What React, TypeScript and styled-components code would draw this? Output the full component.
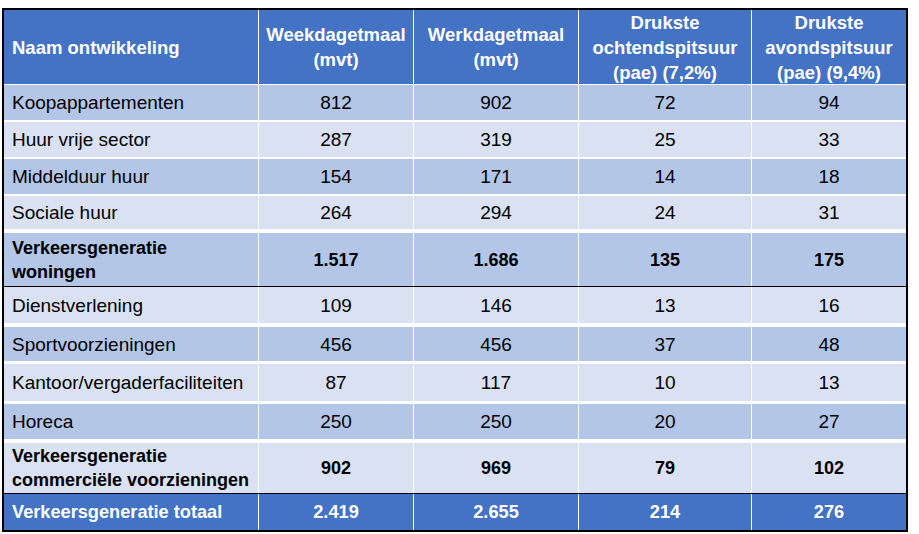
import React from "react";
import styled, { createGlobalStyle } from "styled-components";

const Global = createGlobalStyle`
  html, body { margin: 0; padding: 0; background: #ffffff; }
  body { font-family: "Liberation Sans", Arial, sans-serif; }
`;

const Page = styled.div`
  padding: 8px 0 0 2px;
  width: 919px;
  height: 534px;
  box-sizing: border-box;
`;

const Frame = styled.div`
  width: 906px;
  box-sizing: border-box;
  border: 2px solid #000;
  display: flex;
  flex-direction: column;
`;

type Kind = "head" | "mid" | "light" | "total";

const bg: Record<Kind, string> = {
  head: "#4472c4",
  mid: "#b4c6e7",
  light: "#d9e1f2",
  total: "#4472c4",
};

const Row = styled.div<{ $kind: Kind; $h: number; $sep: string }>`
  display: grid;
  grid-template-columns: 254px 155px 165px 173px 155px;
  height: ${(p) => p.$h}px;
  background: ${(p) => bg[p.$kind]};
  border-bottom: ${(p) => p.$sep};
  color: ${(p) => (p.$kind === "head" || p.$kind === "total" ? "#fff" : "#000")};
  font-weight: ${(p) => (p.$kind === "head" || p.$kind === "total" ? 700 : 400)};
  font-size: ${(p) => (p.$kind === "head" ? "18.5px" : p.$kind === "total" ? "18.2px" : "19px")};
`;

const Cell = styled.div<{ $first?: boolean; $bold?: boolean }>`
  display: flex;
  align-items: center;
  justify-content: ${(p) => (p.$first ? "flex-start" : "center")};
  text-align: ${(p) => (p.$first ? "left" : "center")};
  padding-left: ${(p) => (p.$first ? "8px" : "0")};
  border-left: ${(p) => (p.$first ? "none" : "1px solid #fff")};
  line-height: ${(p) => (p.$bold ? "24px" : "23px")};
  font-weight: ${(p) => (p.$bold ? 700 : "inherit")};
  font-size: ${(p) => (p.$bold ? "18px" : "inherit")};
  box-sizing: border-box;
  overflow: hidden;
  white-space: nowrap;
`;

const HeadText = styled.span`
  line-height: 25px;
  white-space: nowrap;
`;

type R = {
  kind: Kind;
  h: number;
  sep: string;
  bold?: boolean;
  cells: React.ReactNode[];
};

const W = (n: number) => `${n}px solid #fff`;
const B = (n: number) => `${n}px solid #000`;

const rows: R[] = [
  { kind: "mid", h: 35, sep: W(2), cells: ["Koopappartementen", "812", "902", "72", "94"] },
  { kind: "light", h: 35, sep: W(2), cells: ["Huur vrije sector", "287", "319", "25", "33"] },
  { kind: "mid", h: 35, sep: W(2), cells: ["Middelduur huur", "154", "171", "14", "18"] },
  { kind: "light", h: 33, sep: W(4), cells: ["Sociale huur", "264", "294", "24", "31"] },
  {
    kind: "mid",
    h: 53,
    sep: B(1),
    bold: true,
    cells: [
      <>
        Verkeersgeneratie
        <br />
        woningen
      </>,
      "1.517",
      "1.686",
      "135",
      "175",
    ],
  },
  { kind: "light", h: 36, sep: W(4), cells: ["Dienstverlening", "109", "146", "13", "16"] },
  { kind: "mid", h: 34, sep: W(3), cells: ["Sportvoorzieningen", "456", "456", "37", "48"] },
  { kind: "light", h: 37, sep: W(3), cells: ["Kantoor/vergaderfaciliteiten", "87", "117", "10", "13"] },
  { kind: "mid", h: 35, sep: W(4), cells: ["Horeca", "250", "250", "20", "27"] },
  {
    kind: "light",
    h: 50,
    sep: B(1),
    bold: true,
    cells: [
      <>
        Verkeersgeneratie
        <br />
        commerciële voorzieningen
      </>,
      "902",
      "969",
      "79",
      "102",
    ],
  },
  { kind: "total", h: 36, sep: "none", cells: ["Verkeersgeneratie totaal", "2.419", "2.655", "214", "276"] },
];

const heads: React.ReactNode[] = [
  "Naam ontwikkeling",
  <>
    Weekdagetmaal
    <br />
    (mvt)
  </>,
  <>
    Werkdagetmaal
    <br />
    (mvt)
  </>,
  <>
    Drukste
    <br />
    ochtendspitsuur
    <br />
    (pae) (7,2%)
  </>,
  <>
    Drukste
    <br />
    avondspitsuur
    <br />
    (pae) (9,4%)
  </>,
];

export default function App() {
  return (
    <>
      <Global />
      <Page>
        <Frame>
          <Row $kind="head" $h={74} $sep={W(1)}>
            {heads.map((h, i) => (
              <Cell key={i} $first={i === 0}>
                <HeadText>{h}</HeadText>
              </Cell>
            ))}
          </Row>
          {rows.map((r, ri) => (
            <Row key={ri} $kind={r.kind} $h={r.h} $sep={r.sep}>
              {r.cells.map((c, ci) => (
                <Cell key={ci} $first={ci === 0} $bold={r.bold}>
                  {c}
                </Cell>
              ))}
            </Row>
          ))}
        </Frame>
      </Page>
    </>
  );
}
